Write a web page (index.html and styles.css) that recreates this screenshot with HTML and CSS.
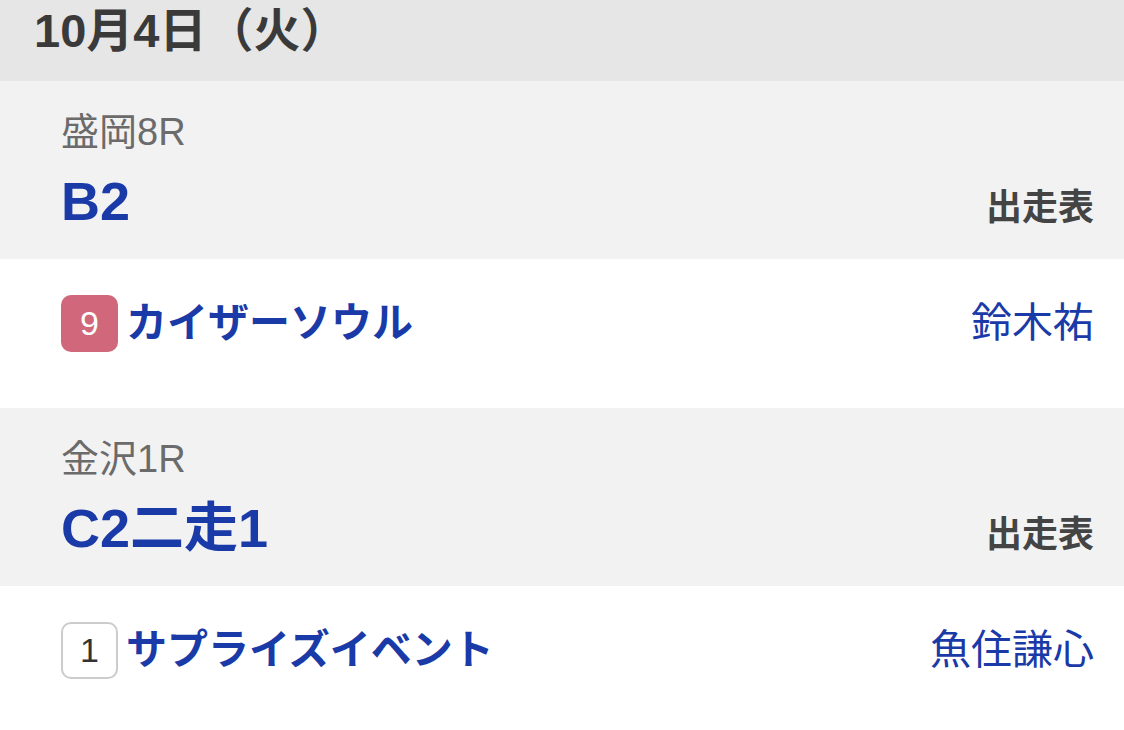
FILE: index.html
```html
<!DOCTYPE html>
<html lang="ja">
<head>
    <meta charset="UTF-8">
    <meta name="viewport" content="width=device-width, initial-scale=1.0">
    <title>出走予定</title>
    <link rel="stylesheet" href="styles.css">
</head>
<body>
    <div class="day">10月4日（火）</div>

    <div class="race">
        <div class="race-place">盛岡8R</div>
        <div class="race-line">
            <span class="race-class">B2</span>
            <a class="race-card" href="#">出走表</a>
        </div>
    </div>
    <div class="entry">
        <span class="gate gate-9">9</span>
        <span class="horse">カイザーソウル</span>
        <span class="jockey">鈴木祐</span>
    </div>

    <div class="race">
        <div class="race-place">金沢1R</div>
        <div class="race-line">
            <span class="race-class">C2二走1</span>
            <a class="race-card" href="#">出走表</a>
        </div>
    </div>
    <div class="entry">
        <span class="gate gate-1">1</span>
        <span class="horse">サプライズイベント</span>
        <span class="jockey">魚住謙心</span>
    </div>
</body>
</html>
```

FILE: styles.css
```css
body {
    margin: 0;
    padding: 0;
    font-family: "Liberation Sans", "Noto Sans CJK JP", sans-serif;
    background-color: #fff;
    color: #333;
}
.day {
    background-color: #e6e6e6;
    padding: 8px 34px 27px;
    font-size: 47px;
    line-height: 46px;
    font-weight: bold;
    color: #3a3a3a;
}
.race {
    background-color: #f2f2f2;
    padding: 31px 30px 29px 61px;
}
.race-place {
    font-size: 38px;
    line-height: 40px;
    color: #6b6b6b;
}
.race-line {
    display: flex;
    justify-content: space-between;
    align-items: baseline;
    margin-top: 20px;
}
.race-class {
    font-size: 54px;
    line-height: 58px;
    font-weight: bold;
    color: #1a3aa8;
}
.race-card {
    font-size: 36px;
    font-weight: bold;
    color: #444;
    text-decoration: none;
}
.entry {
    display: flex;
    align-items: center;
    padding: 36px 30px 56px 61px;
    line-height: 1.2;
}
.gate {
    width: 57px;
    height: 57px;
    box-sizing: border-box;
    border-radius: 10px;
    display: flex;
    align-items: center;
    justify-content: center;
    font-size: 34px;
    margin-right: 8px;
}
.gate-9 {
    background-color: #d0677a;
    color: #fff;
}
.gate-1 {
    background-color: #fff;
    border: 2px solid #cccccc;
    color: #333;
}
.horse {
    font-size: 41px;
    font-weight: bold;
    color: #1a3aa8;
}
.jockey {
    margin-left: auto;
    font-size: 41px;
    color: #1a3aa8;
}
```
